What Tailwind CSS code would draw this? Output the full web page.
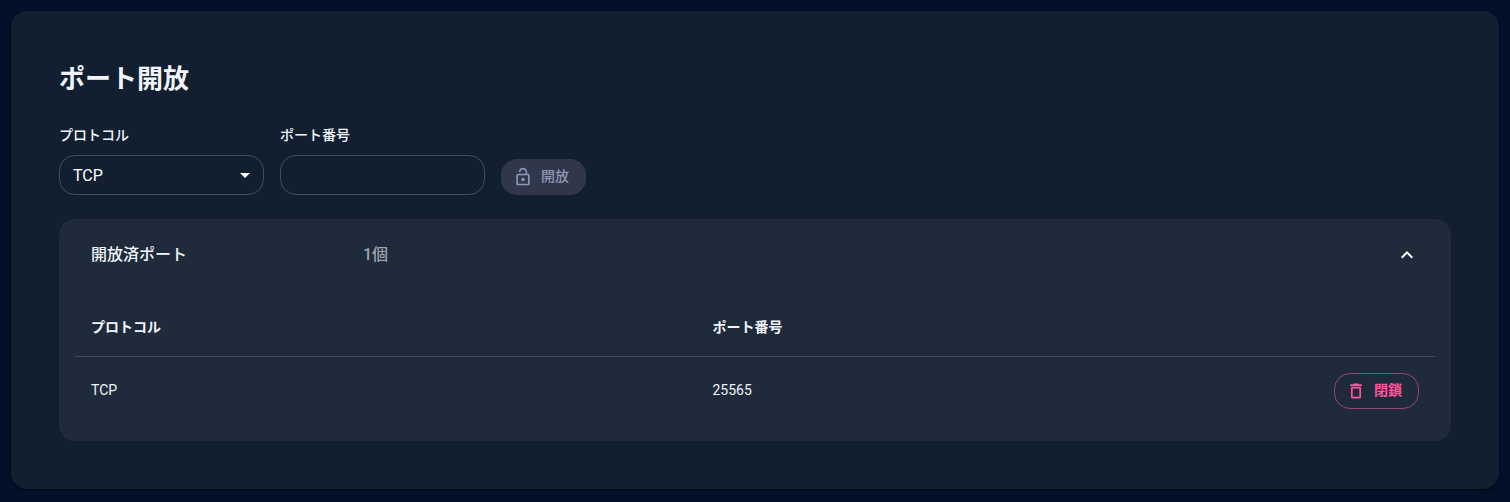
<!DOCTYPE html>
<html lang="ja">
  <head>
    <meta charset="UTF-8" />
    <meta
      name="viewport"
      content="width=device-width, initial-scale=1.0" />
    <title>ポート開放</title>
    <script src="https://cdn.jsdelivr.net/npm/@tailwindcss/browser@4"></script>
  </head>
  <body
    class="min-h-screen bg-[#02102a] p-[11px] pb-[13px] font-[Roboto,'Noto_Sans_CJK_JP',sans-serif] text-slate-100">
    <main class="rounded-2xl bg-[#121f31] p-12 shadow-sm shadow-black/40">
      <h1 class="text-[26px] leading-10 font-bold">ポート開放</h1>

      <form class="mt-6 flex items-end gap-4">
        <div class="w-[205px]">
          <label
            for="protocol"
            class="block text-sm leading-6 font-medium"
            >プロトコル</label
          >
          <div class="relative mt-2">
            <select
              id="protocol"
              class="block h-10 w-full appearance-none rounded-2xl border border-[#414d5f] bg-transparent px-[13px] pt-0.5 text-base text-white">
              <option>TCP</option>
              <option>UDP</option>
            </select>
            <svg
              class="pointer-events-none absolute top-2 right-[7px] size-6 fill-white"
              viewBox="0 0 24 24"
              aria-hidden="true">
              <path d="M7 10l5 5 5-5z" />
            </svg>
          </div>
        </div>

        <div class="w-[205px]">
          <label
            for="port"
            class="block text-sm leading-6 font-medium"
            >ポート番号</label
          >
          <input
            id="port"
            type="text"
            inputmode="numeric"
            class="mt-2 block h-10 w-full rounded-2xl border border-[#414d5f] bg-transparent px-[13px] pt-0.5 text-base text-white" />
        </div>

        <button
          type="button"
          disabled
          class="flex h-9 items-center gap-2 rounded-2xl bg-[#31374a] pr-[17px] pl-3 text-sm font-medium text-[#8f97b9]">
          <svg
            class="size-5 fill-current"
            viewBox="0 0 24 24"
            aria-hidden="true">
            <path
              d="M12 17c1.100 0 2-.9 2-2s-.9-2-2-2-2 .9-2 2 .9 2 2 2zm6-9h-1V6c0-2.760-2.240-5-5-5S7 3.240 7 6h1.900c0-1.710 1.390-3.100 3.100-3.100 1.710 0 3.100 1.390 3.100 3.100v2H6c-1.100 0-2 .9-2 2v10c0 1.100.9 2 2 2h12c1.100 0 2-.9 2-2V10c0-1.100-.9-2-2-2zm0 12H6V10h12v10z" />
          </svg>
          <span class="pb-0.5">開放</span>
        </button>
      </form>

      <details
        open
        class="group mt-6 rounded-2xl bg-[#1f2a3b] px-4 pb-4">
        <summary class="flex h-[72px] cursor-pointer list-none items-center px-4">
          <span class="w-[272px] shrink-0 font-medium">開放済ポート</span>
          <span class="font-medium text-[#a0a5af]">1個</span>
          <svg
            class="ml-auto size-6 rotate-180 fill-white group-open:rotate-0"
            viewBox="0 0 24 24"
            aria-hidden="true">
            <path d="M12 8l-6 6 1.410 1.410L12 10.830l4.590 4.580L18 14z" />
          </svg>
        </summary>

        <table class="mt-2 w-full table-fixed text-left text-sm">
          <thead>
            <tr class="border-b border-[#3d4a60]">
              <th
                scope="col"
                class="px-4 pt-4 pb-[17px] leading-6 font-bold">
                プロトコル
              </th>
              <th
                scope="col"
                class="px-4 pt-4 pb-[17px] leading-6 font-bold">
                ポート番号
              </th>
              <td class="w-[117px]"></td>
            </tr>
          </thead>
          <tbody>
            <tr>
              <td class="px-4 pt-4 pb-[18px]">TCP</td>
              <td class="px-4 pt-4 pb-[18px]">25565</td>
              <td class="px-4 py-4">
                <button
                  type="button"
                  class="flex h-9 w-full items-center gap-2 rounded-2xl border border-[#964577] pl-[11px] text-sm font-bold text-[#ff569e]">
                  <svg
                    class="size-5 fill-current"
                    viewBox="0 0 24 24"
                    aria-hidden="true">
                    <path
                      d="M6 19c0 1.100.9 2 2 2h8c1.100 0 2-.9 2-2V7H6v12zM8 9h8v10H8V9zm7.500-5l-1-1h-5l-1 1H5v2h14V4z" />
                  </svg>
                  <span class="pb-0.5">閉鎖</span>
                </button>
              </td>
            </tr>
          </tbody>
        </table>
      </details>
    </main>
  </body>
</html>
